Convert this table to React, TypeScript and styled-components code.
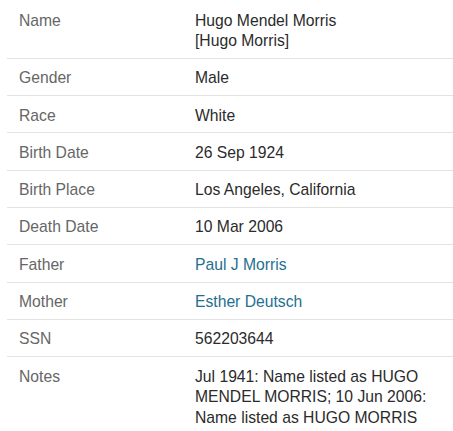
import React from "react";
import styled, { createGlobalStyle } from "styled-components";

const Global = createGlobalStyle`
  html, body { margin: 0; padding: 0; background: #fff; }
  body { font-family: "Liberation Sans", Arial, sans-serif; }
`;

const Table = styled.div`
  margin: 1px 0 0 7px;
  display: flex;
  flex-direction: column;
`;

const Row = styled.div`
  display: grid;
  grid-template-columns: 188px 1fr;
  padding: 9.5px 14px 6.3px 0;
  border-bottom: 1px solid #e3e3e3;
  font-size: 15.7px;
  line-height: 20.5px;
  &:last-child { border-bottom: none; }
`;

const Label = styled.div`
  color: #666666;
  padding-left: 12px;
`;

const Value = styled.div<{ $link?: boolean }>`
  color: ${(p) => (p.$link ? "#1f6f8f" : "#2b2b2b")};
`;

const rows: { label: string; value: React.ReactNode; link?: boolean }[] = [
  { label: "Name", value: <>Hugo Mendel Morris<br />[Hugo Morris]</> },
  { label: "Gender", value: "Male" },
  { label: "Race", value: "White" },
  { label: "Birth Date", value: "26 Sep 1924" },
  { label: "Birth Place", value: "Los Angeles, California" },
  { label: "Death Date", value: "10 Mar 2006" },
  { label: "Father", value: "Paul J Morris", link: true },
  { label: "Mother", value: "Esther Deutsch", link: true },
  { label: "SSN", value: "562203644" },
  {
    label: "Notes",
    value:
      "Jul 1941: Name listed as HUGO MENDEL MORRIS; 10 Jun 2006: Name listed as HUGO MORRIS",
  },
];

export default function App() {
  return (
    <>
      <Global />
      <Table>
        {rows.map((r) => (
          <Row key={r.label}>
            <Label>{r.label}</Label>
            <Value $link={r.link}>{r.value}</Value>
          </Row>
        ))}
      </Table>
    </>
  );
}
